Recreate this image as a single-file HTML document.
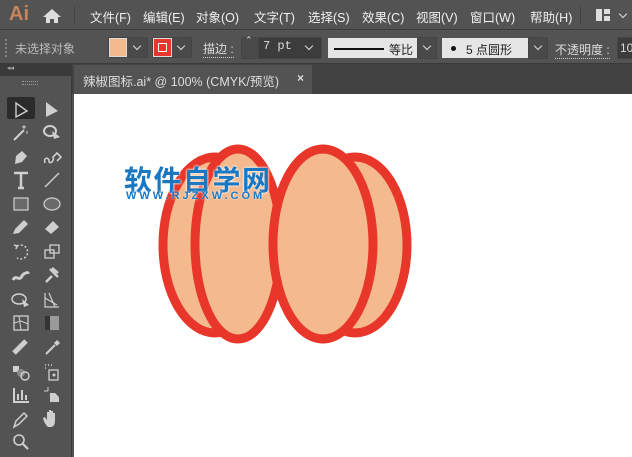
<!DOCTYPE html>
<html><head><meta charset="utf-8"><style>
*{margin:0;padding:0;box-sizing:border-box}
body{width:632px;height:457px;overflow:hidden;background:#535353;font-family:"Liberation Sans","Noto Sans CJK SC",sans-serif;color:#e0e0e0;position:relative}
.a{position:absolute}
.menu{top:0;left:0;width:632px;height:30px;background:#535353;border-bottom:1px solid #3a3a3a}
.menu span{position:absolute;top:7px;font-size:12.5px;color:#f0f0f0}
.ctl{top:31px;left:0;width:632px;height:33px;background:#535353;border-bottom:1px solid #3a3a3a}
.t{font-size:12px;color:#ddd;position:absolute;white-space:nowrap}
.dd{position:absolute;border:1px solid #444;background:#4a4a4a;border-radius:2px}
.chev{position:absolute;width:6px;height:6px;border-right:1.5px solid #ddd;border-bottom:1.5px solid #ddd;transform:rotate(45deg)}
</style></head><body>
<div class="a menu">
<span style="left:9px;top:3px;font-size:20px;color:#c8855a;font-weight:bold">Ai</span>
<svg class="a" style="left:42px;top:8px" width="20" height="16"><path d="M10 1 L19 9 H16 V15 H12 V11 H8 V15 H4 V9 H1 Z" fill="#ddd"/></svg>
<div class="a" style="left:74px;top:6px;width:1px;height:18px;background:#444"></div>
<span style="left:90px">文件(F)</span><span style="left:143px">编辑(E)</span><span style="left:196px">对象(O)</span><span style="left:254px">文字(T)</span><span style="left:308px">选择(S)</span><span style="left:362px">效果(C)</span><span style="left:416px">视图(V)</span><span style="left:470px">窗口(W)</span><span style="left:530px">帮助(H)</span>
<div class="a" style="left:580px;top:6px;width:1px;height:18px;background:#444"></div>
<svg class="a" style="left:596px;top:9px" width="14" height="12"><rect x="0" y="0" width="6" height="12" fill="#ddd"/><rect x="8" y="0" width="6" height="5" fill="#ddd"/><rect x="8" y="7" width="6" height="5" fill="#ddd"/></svg>
<div class="chev" style="left:620px;top:11px"></div>
</div>
<div class="a ctl">
<div class="a" style="left:5px;top:8px;width:2px;height:18px;border-left:2px dotted #888"></div>
<span class="t" style="left:15px;top:9px;color:#bbb">未选择对象</span>
<div class="dd" style="left:108px;top:6px;width:40px;height:21px"></div>
<div class="a" style="left:109px;top:7px;width:18px;height:19px;background:#f5b98e;border:1px solid #ddd"></div>
<div class="chev" style="left:134px;top:12px"></div>
<div class="dd" style="left:152px;top:6px;width:40px;height:21px"></div>
<div class="a" style="left:153px;top:7px;width:19px;height:19px;background:#e8372a;border:1px solid #ddd"></div>
<div class="a" style="left:158px;top:12px;width:9px;height:9px;border:1.5px solid #fff;background:#e8372a"></div>
<div class="chev" style="left:178px;top:12px"></div>
<span class="t" style="left:203px;top:9px;border-bottom:1px dotted #ccc">描边 :</span>
<div class="dd" style="left:241px;top:6px;width:18px;height:22px;background:#4a4a4a"></div>
<span class="t" style="left:245px;top:4px;font-size:9px">⌃</span>
<div class="dd" style="left:258px;top:6px;width:64px;height:22px;background:#3c3c3c"></div>
<span class="t" style="left:263px;top:8px;font-family:'Liberation Mono',monospace;font-size:12px">7 pt</span>
<div class="chev" style="left:306px;top:12px"></div>
<div class="a" style="left:328px;top:7px;width:90px;height:20px;background:#e6e6e6"></div>
<div class="a" style="left:334px;top:17px;width:50px;height:2px;background:#111"></div>
<span class="t" style="left:389px;top:10px;color:#222">等比</span>
<div class="dd" style="left:417px;top:6px;width:20px;height:22px"></div>
<div class="chev" style="left:424px;top:12px"></div>
<div class="a" style="left:442px;top:7px;width:86px;height:20px;background:#e6e6e6"></div>
<div class="a" style="left:451px;top:15px;width:5px;height:5px;border-radius:50%;background:#111"></div>
<span class="t" style="left:466px;top:10px;color:#222">5 点圆形</span>
<div class="dd" style="left:528px;top:6px;width:20px;height:22px"></div>
<div class="chev" style="left:535px;top:12px"></div>
<span class="t" style="left:555px;top:10px;border-bottom:1px dotted #ccc">不透明度 :</span>
<div class="dd" style="left:617px;top:6px;width:20px;height:22px;background:#3c3c3c"></div>
<span class="t" style="left:620px;top:10px">10</span>
</div>
<div class="a" style="left:0;top:64px;width:632px;height:30px;background:#424242"></div>
<div class="a" style="left:0;top:64px;width:72px;height:12px;background:#3a3a3a;font-size:7px;color:#aaa;padding-left:7px">◂◂</div>
<div class="a" style="left:0;top:76px;width:72px;height:381px;background:#535353;border-right:1px solid #3a3a3a"></div>
<div class="a" style="left:22px;top:81px;width:16px;height:4px;border-top:1px dotted #999;border-bottom:1px dotted #999"></div>
<div class="a" style="left:74px;top:65px;width:238px;height:29px;background:#535353"></div>
<span class="t" style="left:83px;top:71px;font-size:12.5px">辣椒图标.ai* @ 100% (CMYK/预览)</span>
<span class="t" style="left:297px;top:71px;font-size:12px;font-weight:bold">×</span>
<div class="a" style="left:74px;top:94px;width:558px;height:363px;background:#fff"></div>
<div class="a" style="left:7px;top:97px;width:28px;height:22px;background:#2b2b2b;border-radius:2px"></div>
<svg class="a" style="left:0;top:0" width="72" height="457" fill="#cfcfcf" stroke="#cfcfcf">
<g transform="translate(21,110)"><path d="M-5 -7 L-5 7 L6 1 Z" fill="none" stroke-width="1.4"/></g>
<g transform="translate(52,110)"><path d="M-6 -8 L-6 7 L6 1 Z" stroke="none"/></g>
<g transform="translate(21,133)"><path d="M-7 7 L3 -3" stroke-width="2"/><path d="M3 -8 v4 M1 -6 h4 M6 -2 v3" stroke-width="1"/></g>
<g transform="translate(52,133)"><ellipse cx="-2" cy="-2" rx="6" ry="5" fill="none" stroke-width="2"/><path d="M0 -2 L8 4 L2 6 Z" stroke="none"/></g>
<g transform="translate(21,157)"><path d="M-6 7 L-5 -1 L1 -6 L6 -1 L1 5 Z" stroke="none"/></g>
<g transform="translate(52,157)"><path d="M-7 6 c-2-6 4-6 4-2 c0 4 6 0 4-4 l4-4 4 4 -4 4" fill="none" stroke-width="1.6"/></g>
<g transform="translate(21,180)"><path d="M-7 -7 H7 M0 -7 V8 M-3 8 H3" fill="none" stroke-width="2.5"/></g>
<g transform="translate(52,180)"><path d="M-7 7 L7 -7" stroke-width="1.4"/></g>
<g transform="translate(21,204)"><rect x="-7" y="-6" width="14" height="12" fill="#6a6a6a" stroke-width="1.2"/></g>
<g transform="translate(52,204)"><ellipse rx="8" ry="6" fill="#6a6a6a" stroke-width="1.2"/></g>
<g transform="translate(21,227)"><path d="M-8 7 L-6 2 L3 -7 L7 -3 L-2 6 Z" stroke="none"/></g>
<g transform="translate(52,227)"><path d="M-7 2 L1 -6 L7 0 L-1 7 Z" stroke="none"/></g>
<g transform="translate(21,252)"><path d="M-4 -6 a7 7 0 1 1 0 12" fill="none" stroke-width="1.5" stroke-dasharray="2 2"/><path d="M-7 -7 l3 1 -1 3" fill="none" stroke-width="1.5"/></g>
<g transform="translate(52,252)"><rect x="-7" y="-2" width="9" height="8" fill="none" stroke-width="1.3"/><rect x="-2" y="-7" width="9" height="8" fill="none" stroke-width="1.3"/></g>
<g transform="translate(21,275)"><path d="M-8 5 c3-6 6 2 9-4 c2-4 6-3 7-4" fill="none" stroke-width="3"/></g>
<g transform="translate(52,275)"><path d="M-6 7 L0 1 M-2 -6 L6 2 M0 -7 L6 -2" stroke-width="2.5"/></g>
<g transform="translate(21,300)"><ellipse cx="-2" cy="-1" rx="7" ry="5" fill="none" stroke-width="1.5"/><path d="M1 -1 L8 5 L3 7 Z" stroke="none"/></g>
<g transform="translate(52,300)"><path d="M-7 -7 v14 h14 M-7 -2 l12 7 M-3 -7 l6 14" fill="none" stroke-width="1.2"/></g>
<g transform="translate(21,323)"><rect x="-7" y="-7" width="14" height="14" fill="none" stroke-width="1.3"/><path d="M-7 0 l7 -2 l7 3 M-2 -7 l2 14" fill="none" stroke-width="1"/></g>
<g transform="translate(52,323)"><rect x="-7" y="-7" width="14" height="14" stroke="none" fill="#9a9a9a"/><rect x="-7" y="-7" width="5" height="14" stroke="none" fill="#333"/></g>
<g transform="translate(21,347)"><path d="M-7 6 L5 -6" stroke-width="5"/></g>
<g transform="translate(52,347)"><path d="M-6 7 L3 -2" stroke-width="2"/><path d="M2 -4 l3-3 3 3 -3 3z" stroke="none"/></g>
<g transform="translate(21,372)"><rect x="-8" y="-6" width="6" height="6" stroke="none"/><circle cx="0" cy="1" r="4" fill="#888" stroke="none"/><circle cx="4" cy="4" r="4" fill="none" stroke-width="1.4"/></g>
<g transform="translate(52,372)"><rect x="-3" y="-2" width="9" height="10" fill="none" stroke-width="1.3"/><circle cx="2" cy="3" r="1.5" stroke="none"/><path d="M-7 -7 h1 M-4 -7 h1 M-1 -7 h1 M-7 -4 h1" stroke-width="1.5"/></g>
<g transform="translate(21,395)"><path d="M-7 -7 V7 H8 M-3 5 V-1 M1 5 V-5 M5 5 V0" fill="none" stroke-width="2"/></g>
<g transform="translate(52,395)"><path d="M-4 -8 v4 M-8 -4 h4" stroke-width="1"/><path d="M-2 -2 h5 l4 4 v5 h-9z" stroke="none"/></g>
<g transform="translate(21,420)"><path d="M-7 7 l2-6 8-8 3 3 -8 8z" fill="none" stroke-width="1.5"/></g>
<g transform="translate(52,420)"><path d="M-4 7 c-4-4-4-6-5-9 l2-1 2 3 v-8 h2 v7 v-9 h2 v9 v-8 h2 v8 v-6 h2 v8 c0 4-2 6-4 6z" stroke="none"/></g>
<g transform="translate(21,442)"><circle cx="-2" cy="-2" r="5" fill="none" stroke-width="1.6"/><path d="M2 2 l5 5" stroke-width="2.2"/></g>
</svg>
<svg class="a" style="left:0;top:0" width="632" height="457">
<g fill="#f5b98e" stroke="#e8372a" stroke-width="9">
<ellipse cx="215" cy="245" rx="52" ry="88"/>
<ellipse cx="355" cy="245" rx="52" ry="88"/>
<ellipse cx="238" cy="244" rx="43" ry="95"/>
<ellipse cx="323" cy="244" rx="50" ry="95"/>
</g>
</svg>
<div class="a" style="left:124px;top:159px;font-size:28px;font-weight:bold;color:#1a78c2;letter-spacing:1.5px;text-shadow:0 0 2px #fff,0 0 2px #fff">软件自学网</div>
<div class="a" style="left:126px;top:190px;font-size:11px;font-weight:bold;color:#1a78c2;letter-spacing:3px;text-shadow:0 0 2px #fff">WWW.RJZXW.COM</div>
</body></html>
